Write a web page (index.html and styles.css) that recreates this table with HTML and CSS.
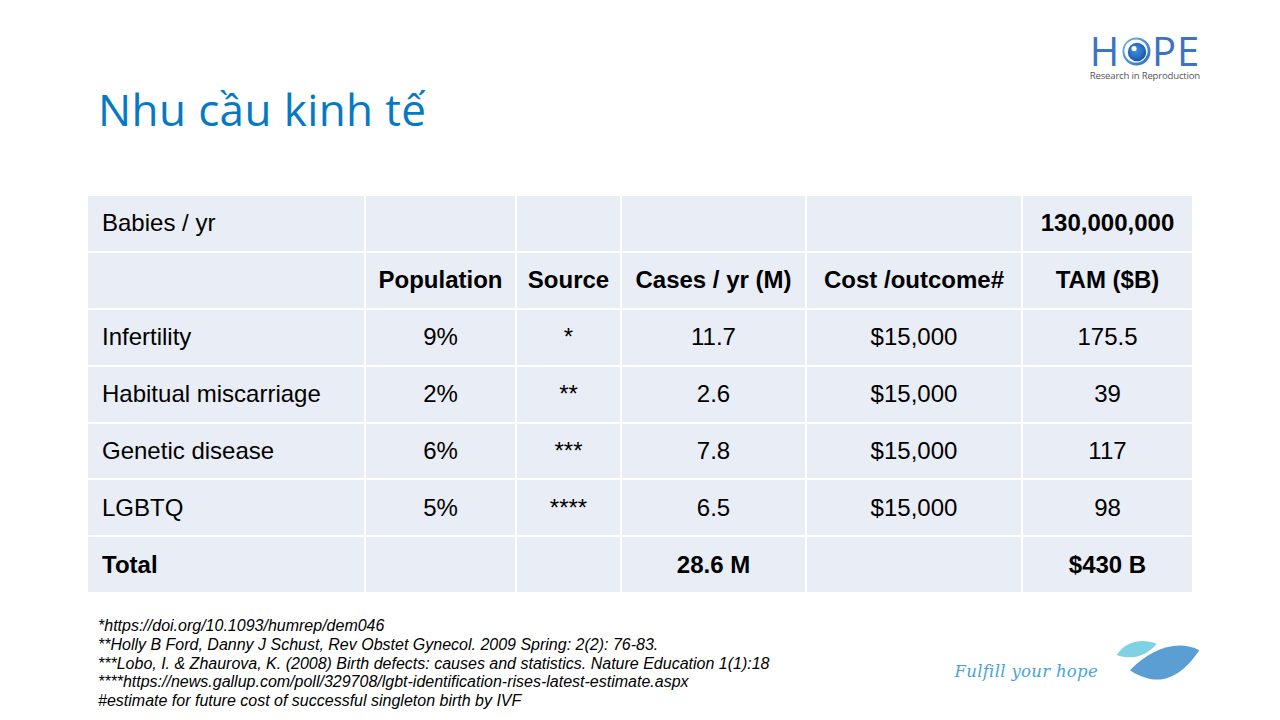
FILE: index.html
```html
<!DOCTYPE html>
<html lang="vi">
<head>
<meta charset="utf-8">
<title>Nhu cầu kinh tế</title>
<link rel="stylesheet" href="styles.css">
</head>
<body>
<div class="slide">
  <header class="top">
    <div class="logo">
      <div class="logo-word">
        <span>H</span>
        <svg class="eye" width="29" height="29" viewBox="0 0 29 29" aria-hidden="true">
          <defs>
            <radialGradient id="iris" cx="0.45" cy="0.42" r="0.6">
              <stop offset="0" stop-color="#3f8fe0"/>
              <stop offset="0.6" stop-color="#2a70c4"/>
              <stop offset="1" stop-color="#1a4f9a"/>
            </radialGradient>
            <linearGradient id="ring" x1="0" y1="0" x2="1" y2="1">
              <stop offset="0" stop-color="#6fb4ec"/>
              <stop offset="1" stop-color="#2b6fc0"/>
            </linearGradient>
          </defs>
          <circle cx="14.5" cy="14.5" r="14" fill="url(#ring)"/>
          <circle cx="14" cy="14" r="11.6" fill="#fff"/>
          <circle cx="15" cy="15" r="9.2" fill="url(#iris)"/>
          <circle cx="12" cy="11.6" r="2.6" fill="#fff"/>
        </svg>
        <span>PE</span>
      </div>
      <div class="logo-sub">Research in Reproduction</div>
    </div>
  </header>

  <h1 class="title">Nhu cầu kinh tế</h1>

  <table class="market">
    <colgroup>
      <col class="c1"><col class="c2"><col class="c3"><col class="c4"><col class="c5"><col class="c6">
    </colgroup>
    <tbody>
      <tr>
        <td class="lbl">Babies / yr</td><td></td><td></td><td></td><td></td><td class="b">130,000,000</td>
      </tr>
      <tr class="b">
        <td class="lbl"></td><td>Population</td><td>Source</td><td>Cases / yr (M)</td><td>Cost /outcome#</td><td>TAM ($B)</td>
      </tr>
      <tr>
        <td class="lbl">Infertility</td><td>9%</td><td>*</td><td>11.7</td><td>$15,000</td><td>175.5</td>
      </tr>
      <tr>
        <td class="lbl">Habitual miscarriage</td><td>2%</td><td>**</td><td>2.6</td><td>$15,000</td><td>39</td>
      </tr>
      <tr>
        <td class="lbl">Genetic disease</td><td>6%</td><td>***</td><td>7.8</td><td>$15,000</td><td>117</td>
      </tr>
      <tr>
        <td class="lbl">LGBTQ</td><td>5%</td><td>****</td><td>6.5</td><td>$15,000</td><td>98</td>
      </tr>
      <tr class="b">
        <td class="lbl">Total</td><td></td><td></td><td>28.6 M</td><td></td><td>$430 B</td>
      </tr>
    </tbody>
  </table>

  <footer class="bottom">
    <div class="notes">
      <p>*https://doi.org/10.1093/humrep/dem046</p>
      <p>**Holly B Ford, Danny J Schust, Rev Obstet Gynecol. 2009 Spring: 2(2): 76-83.</p>
      <p>***Lobo, I. &amp; Zhaurova, K. (2008) Birth defects: causes and statistics. Nature Education 1(1):18</p>
      <p>****https://news.gallup.com/poll/329708/lgbt-identification-rises-latest-estimate.aspx</p>
      <p>#estimate for future cost of successful singleton birth by IVF</p>
    </div>
    <div class="brand">
      <span class="tagline">Fulfill your hope</span>
      <svg class="leaves" width="92" height="46" viewBox="0 0 92 46" aria-hidden="true">
        <path d="M6.7 18 C 14 6, 30 0, 46.7 6.7 C 38 18, 22 24, 6.7 18 Z" fill="#7fd2e2"/>
        <path d="M20 33.3 C 40 12, 68 2, 89.3 13.3 C 78 30, 62 46, 40 42 C 32 40, 25 37, 20 33.3 Z" fill="#5a9ed3"/>
      </svg>
    </div>
  </footer>
</div>
</body>
</html>
```

FILE: styles.css
```css
html, body {
  margin: 0;
  padding: 0;
  background: #fff;
}

.slide {
  width: 1280px;
  height: 720px;
  overflow: hidden;
  font-family: "Liberation Sans", Arial, sans-serif;
  color: #000;
  display: flex;
  flex-direction: column;
}

.top {
  display: flex;
  justify-content: flex-end;
  padding: 35px 80px 0 0;
  height: 49px;
}

.logo {
  display: flex;
  flex-direction: column;
  align-items: flex-start;
}

.logo-word {
  display: flex;
  align-items: center;
  font-family: "Open Sans", sans-serif;
  font-size: 40px;
  line-height: 32px;
  color: #3a74c2;
  letter-spacing: 0.8px;
  height: 32px;
}

.eye {
  margin: 0 1px 0 2px;
}

.logo-sub {
  font-family: "Open Sans", sans-serif;
  font-size: 9.6px;
  line-height: 11px;
  color: #555;
  margin-top: 3px;
  letter-spacing: -0.2px;
}

.title {
  margin: 0;
  padding: 0 0 0 98px;
  font-family: "Open Sans", sans-serif;
  font-weight: 400;
  font-size: 44px;
  line-height: 50px;
  color: #0679c4;
  letter-spacing: 0.4px;
  height: 112px;
}

.market {
  margin-left: 88px;
  border-collapse: collapse;
  border-style: hidden;
  table-layout: fixed;
  width: 1104px;
  font-size: 24px;
}

.c1 { width: 277px; }
.c2 { width: 151px; }
.c3 { width: 105px; }
.c4 { width: 185px; }
.c5 { width: 216px; }
.c6 { width: 170px; }

.market td {
  background: #e9edf5;
  border: 2px solid #fff;
  height: 54.9px;
  padding: 0;
  text-align: center;
  vertical-align: middle;
  white-space: nowrap;
}

.market td.lbl {
  text-align: left;
  padding-left: 14px;
}

.market .b,
.market tr.b td {
  font-weight: 700;
}

.bottom {
  display: flex;
  justify-content: space-between;
  align-items: flex-start;
  padding: 25px 78px 0 98px;
}

.notes {
  font-style: italic;
  font-size: 16px;
  line-height: 18.7px;
}

.notes p {
  margin: 0;
  white-space: nowrap;
}

.brand {
  display: flex;
  align-items: flex-start;
  margin-top: 20px;
}

.tagline {
  font-family: "DejaVu Serif", serif;
  font-style: italic;
  font-size: 16.5px;
  color: #4aa3d8;
  margin-top: 25px;
  margin-right: 12px;
  letter-spacing: 0.3px;
}
```
